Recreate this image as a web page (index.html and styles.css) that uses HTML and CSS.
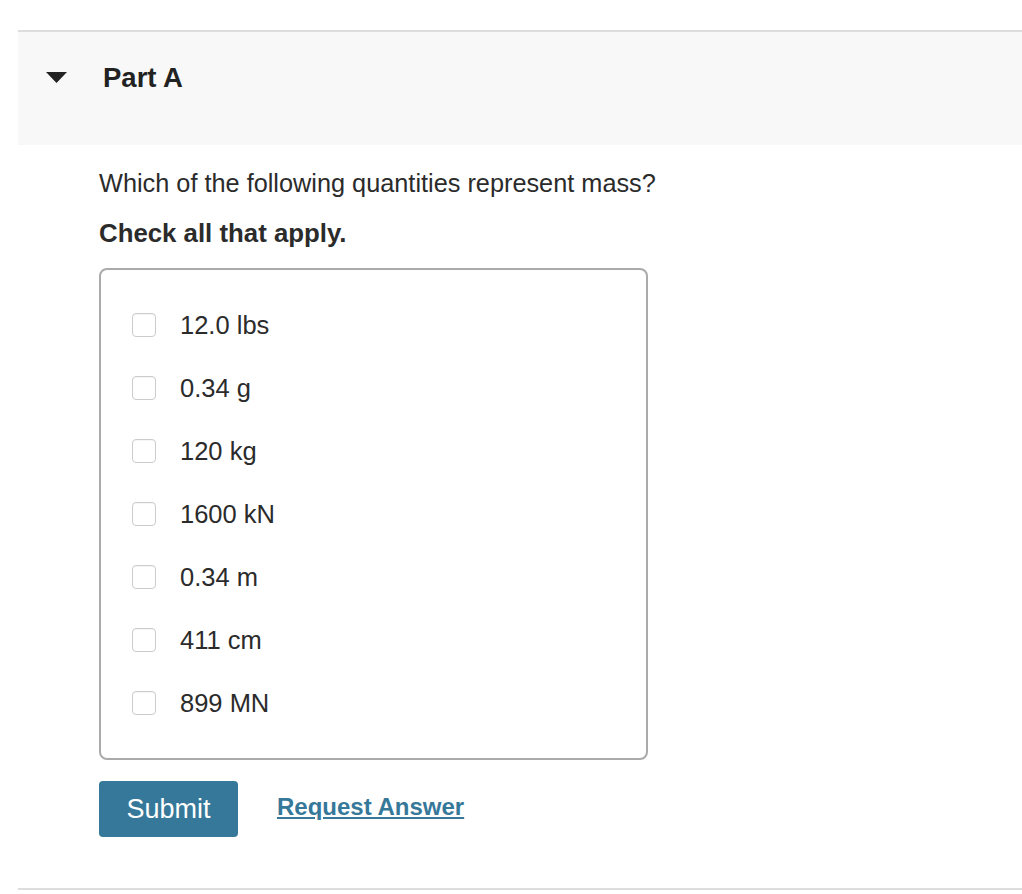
FILE: index.html
```html
<!DOCTYPE html>
<html>
<head>
<meta charset="utf-8">
<link rel="stylesheet" href="styles.css">
</head>
<body>
<div class="part">
  <div class="part-header">
    <svg class="caret" width="21" height="11" viewBox="0 0 21 11"><path d="M0 0 H21 L10.5 11 Z" fill="#222"/></svg>
    <h2 class="part-title">Part A</h2>
  </div>
  <div class="part-body">
    <p class="question">Which of the following quantities represent mass?</p>
    <p class="instruction">Check all that apply.</p>
    <div class="choices">
      <label class="choice"><span class="box"></span><span class="label">12.0 lbs</span></label>
      <label class="choice"><span class="box"></span><span class="label">0.34 g</span></label>
      <label class="choice"><span class="box"></span><span class="label">120 kg</span></label>
      <label class="choice"><span class="box"></span><span class="label">1600 kN</span></label>
      <label class="choice"><span class="box"></span><span class="label">0.34 m</span></label>
      <label class="choice"><span class="box"></span><span class="label">411 cm</span></label>
      <label class="choice"><span class="box"></span><span class="label">899 MN</span></label>
    </div>
    <div class="actions">
      <button class="submit">Submit</button>
      <a class="request" href="#">Request Answer</a>
    </div>
  </div>
</div>
</body>
</html>
```
FILE: styles.css
```css
html, body {
  margin: 0;
  padding: 0;
  background: #fff;
}
body {
  font-family: "Liberation Sans", Arial, Helvetica, sans-serif;
  color: #222;
  padding-top: 30px;
}
.part {
  margin-left: 18px;
  border-top: 2px solid #ddd;
  border-bottom: 2px solid #ddd;
}
.part-header {
  background: #f8f8f8;
  height: 113px;
  display: flex;
  align-items: flex-start;
  padding: 30px 0 0 28px;
  box-sizing: border-box;
}
.caret {
  display: block;
  margin-top: 10px;
}
.part-title {
  margin: 0 0 0 36px;
  font-size: 27.5px;
  font-weight: bold;
  color: #222;
  line-height: 32px;
}
.part-body {
  padding: 22px 0 51px 81px;
}
.question {
  margin: 0;
  font-size: 25.3px;
  line-height: 32px;
  color: #2b2b2b;
}
.instruction {
  margin: 18px 0 0 0;
  font-size: 25.8px;
  font-weight: bold;
  line-height: 32px;
  color: #2b2b2b;
}
.choices {
  margin-top: 19px;
  width: 549px;
  box-sizing: border-box;
  border: 2px solid #aaa;
  border-radius: 8px;
  padding: 39px 0 39px 31px;
  display: flex;
  flex-direction: column;
  gap: 31px;
}
.choice {
  display: flex;
  align-items: center;
  height: 32px;
}
.box {
  width: 22px;
  height: 22px;
  border: 1px solid #ccc;
  border-radius: 4px;
  background: #fff;
  box-shadow: inset 0 1px 1px rgba(0,0,0,0.04);
  flex: none;
}
.label {
  margin-left: 24px;
  font-size: 25.5px;
  color: #2b2b2b;
}
.actions {
  margin-top: 21px;
  display: flex;
  align-items: center;
}
.submit {
  width: 139px;
  height: 56px;
  background: #367899;
  color: #fff;
  border: none;
  border-radius: 4px;
  font-family: "Liberation Sans", Arial, sans-serif;
  font-size: 27px;
  padding: 0;
}
.request {
  margin-left: 39px;
  color: #367899;
  font-size: 24px;
  font-weight: bold;
  text-decoration: underline;
  margin-top: -4px;
}
```
